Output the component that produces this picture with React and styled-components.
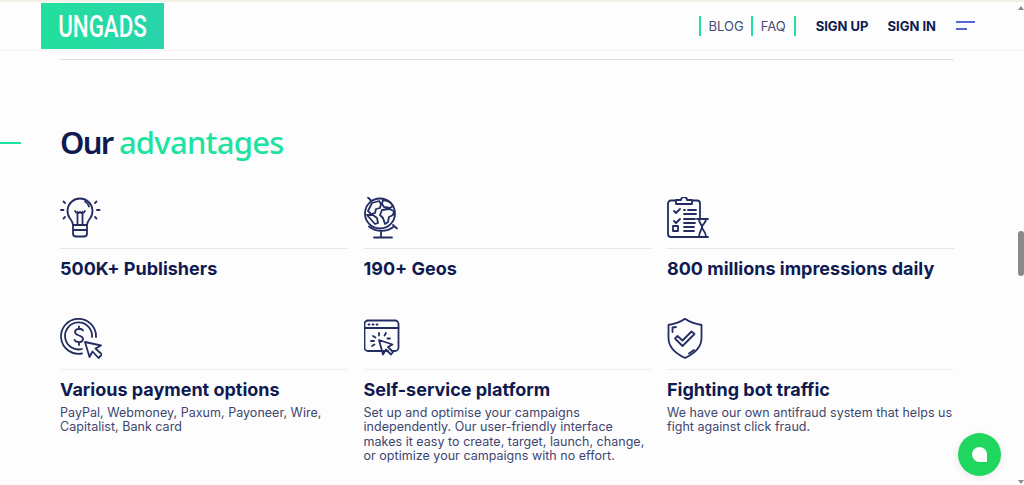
import React from 'react';
import styled, { createGlobalStyle } from 'styled-components';

const navy = '#0f1a50';
const mint = '#1ee3a0';

const GlobalStyle = createGlobalStyle`
  html, body {
    margin: 0;
    padding: 0;
    height: 100%;
    overflow: hidden;
    background: #fdfdfe;
  }
  body {
    font-family: 'Inter', 'Liberation Sans', sans-serif;
    color: ${navy};
  }
`;

const Page = styled.div`
  height: 485px;
  overflow: hidden;
  border-top: 2px solid #f1f1e8;
  box-sizing: border-box;
`;

const Header = styled.header`
  height: 49px;
  padding: 1px 49px 0 41px;
  box-sizing: border-box;
  display: flex;
  align-items: flex-start;
  justify-content: space-between;
  border-bottom: 1px solid #f3f4f9;
`;

const Logo = styled.a`
  width: 123px;
  height: 46px;
  display: flex;
  align-items: center;
  justify-content: center;
  background: linear-gradient(90deg, #22e09c, #29d3ac);
  color: #fff;
  font-family: 'Roboto', sans-serif;
  font-size: 31px;
  font-weight: 500;
`;

const LogoText = styled.span`
  display: inline-block;
  transform: scaleX(0.72);
`;

const Nav = styled.nav`
  display: flex;
  align-items: center;
  height: 45px;
`;

const NavLink = styled.a`
  height: 20px;
  line-height: 20px;
  padding: 0 ${(p) => (p.$last ? 8 : 7)}px 0 8px;
  border-left: 2px solid ${mint};
  border-right: ${(p) => (p.$last ? `2px solid ${mint}` : '0')};
  font-size: 13px;
  color: #454d78;
`;

const AuthLinks = styled.div`
  display: flex;
  gap: 19px;
  margin-left: 20px;
`;

const AuthLink = styled.a`
  font-size: 13px;
  font-weight: 700;
  color: ${navy};
`;

const Burger = styled.div`
  width: 19px;
  margin-left: 20px;
  display: flex;
  flex-direction: column;
  gap: 5px;
`;

const BurgerLine = styled.span`
  display: block;
  height: 2px;
  width: ${(p) => p.$w}px;
  background: #5468d4;
`;

const Container = styled.main`
  margin: 0 70px 0 60px;
`;

const Rule = styled.div`
  height: 1px;
  margin-top: 8px;
  background: #dedfe3;
`;

const TitleRow = styled.div`
  position: relative;
  margin-top: 61px;
`;

const TitleDash = styled.span`
  position: absolute;
  left: -60px;
  top: 21px;
  width: 21px;
  height: 2px;
  background: ${mint};
`;

const Title = styled.h2`
  margin: 0;
  font-family: 'Noto Sans', sans-serif;
  font-size: 31px;
  line-height: 42px;
  font-weight: 600;
  letter-spacing: -1.7px;
  color: ${navy};

  em {
    font-style: normal;
    font-weight: 500;
    letter-spacing: -0.75px;
    color: ${mint};
  }
`;

const Grid = styled.div`
  display: grid;
  grid-template-columns: repeat(3, 287px);
  column-gap: 16.5px;
  margin-top: 34px;
`;

const Card = styled.article`
  min-height: ${(p) => (p.$top ? 121 : 0)}px;
`;

const IconBox = styled.div`
  height: 52px;
  box-sizing: border-box;
  border-bottom: 1px solid ${(p) => (p.$top ? '#e4e4ec' : '#eeeef4')};

  svg {
    display: block;
    fill: none;
    stroke: #232d62;
    stroke-width: 1.8;
    stroke-linecap: round;
    stroke-linejoin: round;
  }
`;

const CardTitle = styled.h3`
  margin: 10px 0 0;
  font-size: 18px;
  line-height: 19px;
  font-weight: 700;
  color: ${navy};
`;

const CardText = styled.p`
  margin: 7px 0 0;
  font-size: 12.5px;
  line-height: 14.4px;
  letter-spacing: 0.03px;
  color: #3d466f;
`;

const ScrollTrack = styled.div`
  position: fixed;
  top: 0;
  right: 0;
  bottom: 0;
  width: 7px;
`;

const ScrollThumb = styled.div`
  position: absolute;
  top: 231px;
  right: 0;
  width: 6px;
  height: 45px;
  border-radius: 3px;
  background: #8a8a8a;
`;

const ScrollArrow = styled.div`
  position: absolute;
  right: 0;
  width: 0;
  height: 0;
  border-left: 3px solid transparent;
  border-right: 3px solid transparent;
  ${(p) => (p.$up
    ? 'top: 6px; border-bottom: 4px solid #8a8a8a;'
    : 'bottom: 1px; border-top: 4px solid #8a8a8a;')}
`;

const ChatButton = styled.button`
  position: fixed;
  left: 958px;
  top: 433px;
  width: 43px;
  height: 43px;
  padding: 0;
  border: 0;
  border-radius: 50%;
  background: #1fd65f;
  box-shadow: 0 2px 10px rgba(0, 0, 0, 0.08);
  display: flex;
  align-items: center;
  justify-content: center;
`;

const ChatGlyph = styled.span`
  width: 15px;
  height: 15px;
  background: #fff;
  border-radius: 50% 50% 0 50%;
`;

const BulbIcon = () => (
  <svg width="42" height="42" viewBox="0 0 42 42">
    <path d="M13 28c0-3-1.500-4.500-3-6.500a12.500 12.500 0 1 1 20 0c-1.500 2-3 3.500-3 6.500z" />
    <path d="M13 28v8.500a3 3 0 0 0 3 3h8a3 3 0 0 0 3-3V28M13 33h14" />
    <path d="M17.500 28V15M22.500 28V15M15 14c1 2.500 3.500 2.500 5 1 1.500 1.500 4 1.500 5 -1" />
    <path d="M25 4.500a8 8 0 0 1 4 5" />
    <path d="M1 13h2.500M37 13h2.500M3.500 4.500L5 6M36.500 4.500L35 6M3.500 21.500L5 20M36.500 21.500L35 20" />
  </svg>
);

const GlobeIcon = () => (
  <svg width="42" height="42" viewBox="0 0 42 42">
    <circle cx="16" cy="16.500" r="15" />
    <path d="M4 .5l3 3M29 28l4 3.500M5 29.500a20 20 0 0 0 25 0" />
    <path d="M17 35v5M10 40.500h18" />
    <path d="M8 6l7-2 2 3-1 4-4 1-1 4-4 1-3-3zM19 3l7 2 3 4-3 2-6-1-2-3zM18 13l7-1 5 2-1 4-4 2-1 5-3 2-2-6-3-3zM3 18l6 0 4 3 1 5-3 1z" />
  </svg>
);

const ClipboardIcon = () => (
  <svg width="42" height="42" viewBox="0 0 42 42">
    <path d="M9 3.500H4a3 3 0 0 0-3 3V37a3 3 0 0 0 3 3h26M25 3.500h5a3 3 0 0 1 3 3v14" />
    <path d="M9 7V3h5a3 3 0 0 1 6 0h5v4z" />
    <path d="M7 14l2 2 4-4M7 24l2 2 4-4M6 29h5v5H6z" />
    <path d="M17 13h1M21 13h8M17 17h12M17 22h11M17 26h11M17 30h10M17 34h10" />
    <path d="M30 22h11M30 40h11M32 22c0 5 3 5 3 8s-3 4-3 10M39 22c0 5-4 5-4 8s4 4 4 10" />
  </svg>
);

const PaymentIcon = () => (
  <svg width="42" height="42" viewBox="0 0 42 42">
    <path d="M36 19a17.500 17.500 0 1 0-14 16.500" />
    <path d="M32 19a13.500 13.500 0 1 0-10 12" />
    <path d="M23 12.500c-1.500-2.500-8-2.500-8 1.500 0 4.500 8 2.500 8 7 0 4-6.500 4-8.500 1M19 8.500v2.500M19 24.500v2.500" />
    <path d="M25 24l4.500 15 3-5.500 6 6.500 3.500-3.500-6.500-6 5.500-3z" />
  </svg>
);

const WindowIcon = () => (
  <svg width="42" height="42" viewBox="0 0 42 42">
    <path d="M24 33H4a3.500 3.500 0 0 1-3.500-3.500V6A3.500 3.500 0 0 1 4 2.500h27A3.500 3.500 0 0 1 34.500 6v23.500A3.500 3.500 0 0 1 31 33h-2" />
    <path d="M.5 10h34" />
    <path d="M4.500 6.500h1M8.500 6.500h1M12.500 6.500h1" />
    <path d="M15 22l4 14.500 3-5 5 5 2-2.500-5-5 4.500-2.500z" />
    <path d="M15 15v2.500M22 15l-1.500 2.500M9 18l2.500 1.500M26 20.500h-2.500M7 23h3M8 28l2.500-1.500" />
  </svg>
);

const ShieldIcon = () => (
  <svg width="42" height="42" viewBox="0 0 42 42">
    <path d="M18 .8C13.500 4 8 6 1.500 7v13c0 9 7 15.500 16.500 20 9.500-4.500 16.500-11 16.500-20V7C28 6 22.500 4 18 .8z" />
    <path d="M5.500 14V9.500l3.500-.5M27 32l-5 3.500" />
    <path d="M8 20.500l2.500-2.500 5 4.500 9-9 3 2.500-12 12z" />
  </svg>
);

const features = [
  { icon: <BulbIcon />, title: '500K+ Publishers', top: true },
  { icon: <GlobeIcon />, title: '190+ Geos', top: true },
  { icon: <ClipboardIcon />, title: '800 millions impressions daily', top: true },
  {
    icon: <PaymentIcon />,
    title: 'Various payment options',
    text: 'PayPal, Webmoney, Paxum, Payoneer, Wire, Capitalist, Bank card',
  },
  {
    icon: <WindowIcon />,
    title: 'Self-service platform',
    text: 'Set up and optimise your campaigns independently. Our user-friendly interface makes it easy to create, target, launch, change, or optimize your campaigns with no effort.',
  },
  {
    icon: <ShieldIcon />,
    title: 'Fighting bot traffic',
    text: 'We have our own antifraud system that helps us fight against click fraud.',
  },
];

export default function App() {
  return (
    <Page>
      <GlobalStyle />
      <Header>
        <Logo><LogoText>UNGADS</LogoText></Logo>
        <Nav>
          <NavLink>BLOG</NavLink>
          <NavLink $last>FAQ</NavLink>
          <AuthLinks>
            <AuthLink>SIGN UP</AuthLink>
            <AuthLink>SIGN IN</AuthLink>
          </AuthLinks>
          <Burger>
            <BurgerLine $w={19} />
            <BurgerLine $w={11} />
          </Burger>
        </Nav>
      </Header>
      <Container>
        <Rule />
        <TitleRow>
          <TitleDash />
          <Title>Our <em>advantages</em></Title>
        </TitleRow>
        <Grid>
          {features.map((f) => (
            <Card key={f.title} $top={f.top}>
              <IconBox $top={f.top}>{f.icon}</IconBox>
              <CardTitle>{f.title}</CardTitle>
              {f.text && <CardText>{f.text}</CardText>}
            </Card>
          ))}
        </Grid>
      </Container>
      <ScrollTrack>
        <ScrollArrow $up />
        <ScrollThumb />
        <ScrollArrow />
      </ScrollTrack>
      <ChatButton aria-label="Chat"><ChatGlyph /></ChatButton>
    </Page>
  );
}
